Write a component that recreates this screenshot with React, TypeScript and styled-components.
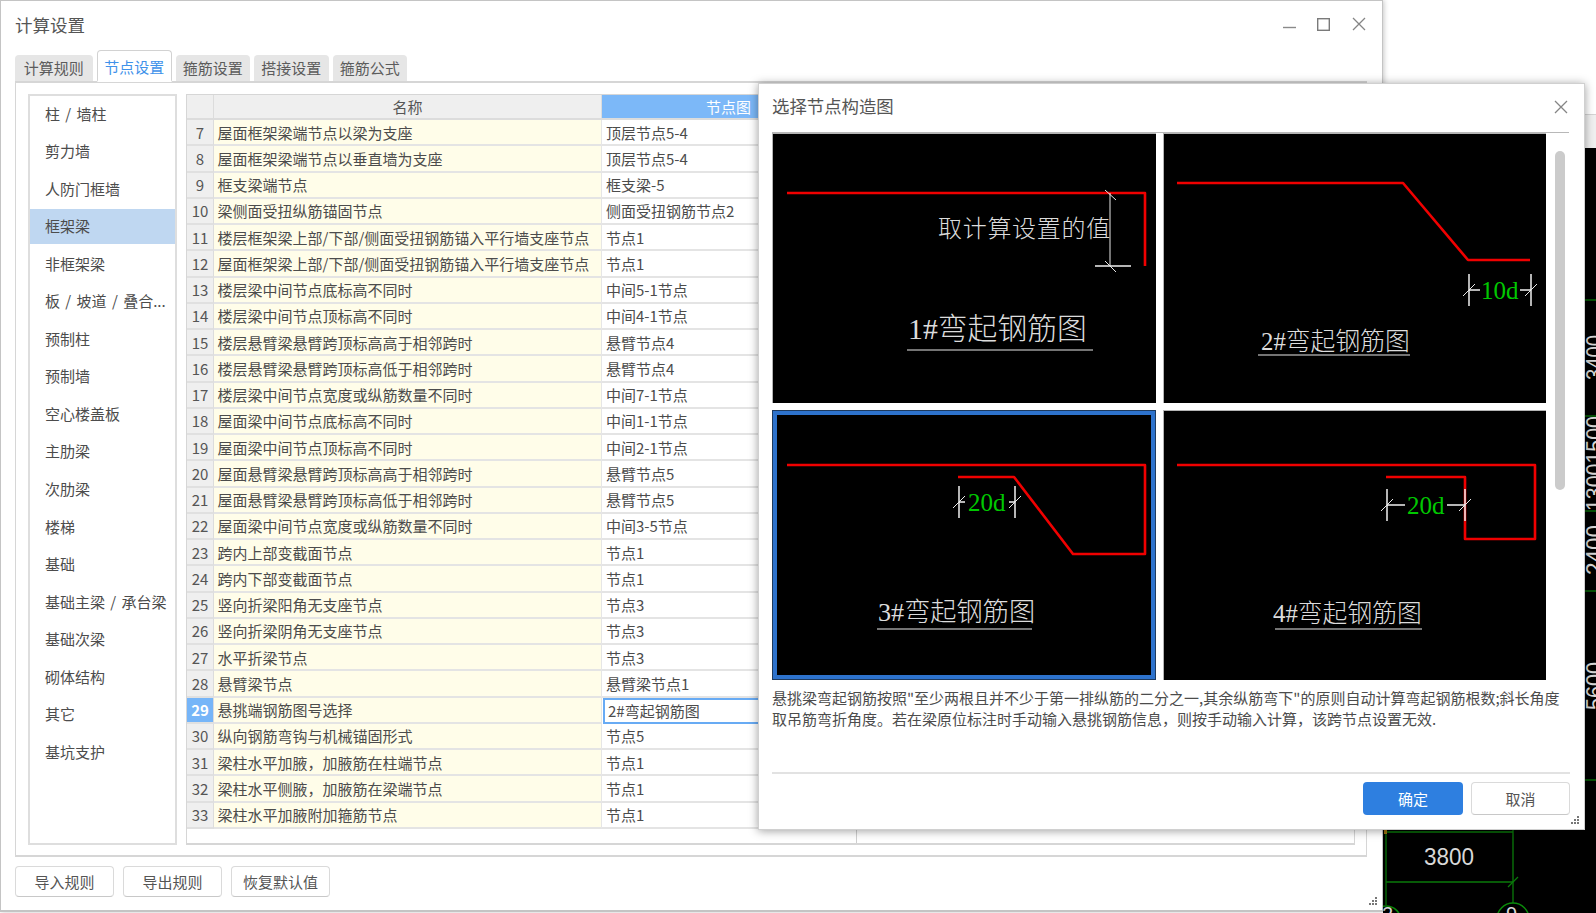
import React from "react";
import styled, { createGlobalStyle } from "styled-components";

const Global = createGlobalStyle`
  html, body { margin: 0; padding: 0; background: #fff; }
  body { font-family: "Noto Sans CJK SC", "Noto Sans", sans-serif; color: #4c4c4c; }
  * { box-sizing: border-box; }
`;

const Desktop = styled.div`
  position: relative;
  width: 1596px;
  height: 913px;
  overflow: hidden;
  background: #fff;
`;

/* window behind: the CAD view */
const CadWindow = styled.div`
  position: absolute;
  left: 1383px;
  top: 0;
  width: 213px;
  height: 913px;
  display: flex;
  flex-direction: column;
`;
const CadTop = styled.div`
  height: 115px;
  background: #fff;
  border-bottom: 1px solid #d4d4d4;
`;
const CadStrip = styled.div`
  height: 33px;
  background: #f0f0f0;
`;
const CadView = styled.div`
  flex: 1;
  background: #000;
  svg { display: block; }
`;

/* main window */
const MainWindow = styled.div`
  position: absolute;
  left: 0;
  top: 0;
  width: 1383px;
  height: 912px;
  background: #fff;
  border: 1px solid #c4c4c4;
  border-bottom-width: 2px;
  box-shadow: 1px 0 5px rgba(0, 0, 0, 0.22);
  padding: 0 15px 0 14px;
  display: flex;
  flex-direction: column;
`;
const TitleBar = styled.div`
  height: 49px;
  flex: none;
  display: flex;
  align-items: center;
  justify-content: space-between;
  padding-bottom: 1px;
`;
const WindowTitle = styled.div`
  font-size: 17.5px;
  line-height: 24px;
  color: #555;
`;
const WindowControls = styled.div`
  display: flex;
  gap: 22px;
  align-items: center;
  margin-right: 1px;
  margin-bottom: 2px;
  svg { display: block; }
`;
const MinimizeIcon = styled.svg`
  margin: 0 -1px 4px 1px;
`;
const TabBar = styled.div`
  height: 31px;
  flex: none;
  display: flex;
  align-items: flex-end;
  gap: 4px;
  position: relative;
  z-index: 1;
`;
const Tab = styled.div<{ $active?: boolean; $first?: boolean }>`
  width: ${(p) => (p.$first ? "77.5px" : "74.5px")};
  height: ${(p) => (p.$active ? "32px" : "26px")};
  margin-bottom: ${(p) => (p.$active ? "-1px" : "0")};
  margin-left: ${(p) => (p.$active ? "0.5px" : "0")};
  display: flex;
  align-items: center;
  justify-content: center;
  padding-top: ${(p) => (p.$active ? "1px" : "0")};
  padding-bottom: ${(p) => (p.$active ? "0" : "1px")};
  font-size: 15px;
  border-radius: 4px 4px 0 0;
  color: ${(p) => (p.$active ? "#3f92ea" : "#5c5c5c")};
  background: ${(p) => (p.$active ? "#fff" : "#e6e6e6")};
  border: ${(p) => (p.$active ? "1px solid #d2d2d2" : "none")};
  border-bottom: ${(p) => (p.$active ? "2px solid #fff" : "none")};
`;
const Pane = styled.div`
  height: 776px;
  flex: none;
  border: 1px solid #d6d6d6;
  border-top-width: 2px;
  border-bottom-width: 2px;
  padding: 11px 11px 10px 12px;
  display: flex;
  gap: 9px;
`;
const Sidebar = styled.div`
  width: 149px;
  flex: none;
  border: 2px solid #dedede;
  padding-top: 0.5px;
  display: flex;
  flex-direction: column;
  gap: 2.55px;
`;
const SideItem = styled.div<{ $active?: boolean }>`
  height: 35px;
  flex: none;
  padding: 0 0 2px 15px;
  display: flex;
  align-items: center;
  font-size: 15px;
  word-spacing: 2px;
  white-space: pre;
  background: ${(p) => (p.$active ? "#bfd7f1" : "transparent")};
`;
const Table = styled.div`
  flex: 1;
  border: 1px solid #d6d6d6;
  border-bottom-width: 2px;
  display: flex;
  flex-direction: column;
  min-width: 0;
`;
const Row = styled.div<{ $header?: boolean }>`
  display: grid;
  grid-template-columns: 27px 388px 254px 1fr;
  height: ${(p) => (p.$header ? "25px" : "26.25px")};
  flex: none;
`;
const IndexCell = styled.div<{ $current?: boolean }>`
  display: flex;
  align-items: center;
  justify-content: center;
  font-size: 15px;
  background: ${(p) => (p.$current ? "#76b5f8" : "#efefef")};
  color: ${(p) => (p.$current ? "#fff" : "#555")};
  font-weight: ${(p) => (p.$current ? 700 : 400)};
  border-right: 1px solid #dcdcdc;
  border-bottom: 2px solid #e0e0e0;
`;
const NameCell = styled.div`
  display: flex;
  align-items: center;
  padding-left: 3.5px;
  font-size: 15px;
  white-space: nowrap;
  background: #fffde9;
  border-right: 1px solid #e6e6e6;
  border-bottom: 2px solid #e4e4e4;
`;
const NodeCell = styled.div<{ $current?: boolean }>`
  display: flex;
  align-items: center;
  padding-left: ${(p) => (p.$current ? "3px" : "4px")};
  font-size: 15px;
  white-space: nowrap;
  background: #fff;
  border: ${(p) => (p.$current ? "2px solid #68abf4" : "none")};
  border-bottom: 2px solid ${(p) => (p.$current ? "#68abf4" : "#e4e4e4")};
  margin-left: ${(p) => (p.$current ? "1px" : "0")};
`;
const HeadCell = styled.div<{ $active?: boolean }>`
  display: flex;
  align-items: center;
  justify-content: center;
  font-size: 15px;
  padding-bottom: 1px;
  background: ${(p) => (p.$active ? "#7cb8f8" : "#efefef")};
  color: ${(p) => (p.$active ? "#fff" : "#555")};
  border-right: 1px solid #dcdcdc;
  border-bottom: 2px solid #dcdcdc;
`;
const TableFiller = styled.div`
  flex: 1;
  display: grid;
  grid-template-columns: 670px 1fr;
`;
const FillerLeft = styled.div`
  border-right: 1px solid #cfcfcf;
`;
const FillerRight = styled.div``;
const Footer = styled.div`
  display: flex;
  gap: 9px;
  padding-top: 9px;
`;
const FootButton = styled.div`
  width: 99px;
  height: 31px;
  display: flex;
  align-items: center;
  justify-content: center;
  font-size: 15px;
  border: 1px solid #dadada;
  border-bottom-color: #c8c8c8;
  border-radius: 4px;
  background: #fff;
  color: #555;
`;
const Grip = styled.svg`
  position: absolute;
  display: block;
  right: 4px;
  bottom: 4px;
`;

/* dialog */
const Dialog = styled.div`
  position: absolute;
  left: 758px;
  top: 83px;
  width: 827px;
  height: 747px;
  background: #fff;
  border: 1px solid #d0d0d0;
  box-shadow: 0 1px 9px rgba(0, 0, 0, 0.38);
  padding: 0 14px 0 13px;
  display: flex;
  flex-direction: column;
`;
const DialogHeader = styled.div`
  height: 49px;
  flex: none;
  border-bottom: 1px solid #b8b8b8;
  margin-right: 1px;
  display: flex;
  align-items: center;
  justify-content: space-between;
  padding-bottom: 5px;
`;
const DialogTitle = styled.div`
  font-size: 17.4px;
  color: #555;
`;
const CloseButton = styled.div`
  margin: 2px 1px 0 0;
  svg { display: block; }
`;
const DialogBody = styled.div`
  display: flex;
  flex: none;
`;
const Gallery = styled.div`
  width: 774px;
  flex: none;
  display: grid;
  grid-template-columns: 384px 383px;
  grid-template-rows: 270px 270px;
  gap: 7px;
`;
const Figure = styled.div<{ $selected?: boolean }>`
  background: #000;
  box-shadow: ${(p) =>
    p.$selected
      ? "inset 0 0 0 1px #1d3a5e, inset 0 0 0 5px #2d72cc"
      : "inset 1px 1px 0 #b4b4b4"};
  svg { display: block; }
`;
const ScrollTrack = styled.div`
  padding: 18px 0 0 9px;
`;
const ScrollThumb = styled.div`
  width: 10px;
  height: 339px;
  border-radius: 5px;
  background: #cbcbcb;
`;
const Description = styled.div`
  flex: 1;
  padding-top: 8px;
  font-size: 15px;
  line-height: 20.6px;
  white-space: nowrap;
  color: #4c4c4c;
`;
const DialogFooter = styled.div`
  height: 57px;
  flex: none;
  border-top: 2px solid #e2e2e2;
  padding-top: 8px;
  display: flex;
  justify-content: flex-end;
  gap: 8px;
`;
const PrimaryButton = styled.div`
  width: 100px;
  height: 33px;
  display: flex;
  align-items: center;
  justify-content: center;
  padding-bottom: 1px;
  font-size: 15px;
  color: #fff;
  background: #2e7fe0;
  border-radius: 4px;
`;
const SecondaryButton = styled.div`
  width: 99px;
  height: 33px;
  display: flex;
  align-items: center;
  justify-content: center;
  padding-bottom: 1px;
  font-size: 15px;
  color: #555;
  background: #fff;
  border: 1px solid #dadada;
  border-bottom-color: #c8c8c8;
  border-radius: 4px;
`;

/* drawing parts */
const Rebar = styled.polyline`
  fill: none;
  stroke: #f00000;
  stroke-width: 2.6;
  stroke-linejoin: round;
`;
const Dim = styled.line`
  stroke: #e8e8e8;
  stroke-width: 1;
`;
const DimStrong = styled.line`
  stroke: #f2f2f2;
  stroke-width: 1.5;
`;
const DrawText = styled.text<{ $size: number }>`
  font-family: "Liberation Serif", "Noto Sans CJK SC", serif;
  font-size: ${(p) => p.$size}px;
  font-weight: 300;
  fill: #dcdcdc;
`;
const GreenText = styled.text`
  font-family: "Liberation Serif", serif;
  font-size: 25px;
  fill: #00c800;
`;
const CadLine = styled.line`
  stroke: #0a7a0a;
  stroke-width: 1.3;
`;
const CadCircle = styled.circle`
  fill: none;
  stroke: #0a8a0a;
  stroke-width: 1.5;
`;
const CadText = styled.text`
  font-family: "Liberation Sans", sans-serif;
  font-size: 24px;
  fill: #d8d8d8;
`;

const sideItems = [
  "柱 / 墙柱", "剪力墙", "人防门框墙", "框架梁", "非框架梁", "板 / 坡道 / 叠合...",
  "预制柱", "预制墙", "空心楼盖板", "主肋梁", "次肋梁", "楼梯", "基础",
  "基础主梁 / 承台梁", "基础次梁", "砌体结构", "其它", "基坑支护",
];

const rows: [number, string, string][] = [
  [7, "屋面框架梁端节点以梁为支座", "顶层节点5-4"],
  [8, "屋面框架梁端节点以垂直墙为支座", "顶层节点5-4"],
  [9, "框支梁端节点", "框支梁-5"],
  [10, "梁侧面受扭纵筋锚固节点", "侧面受扭钢筋节点2"],
  [11, "楼层框架梁上部/下部/侧面受扭钢筋锚入平行墙支座节点", "节点1"],
  [12, "屋面框架梁上部/下部/侧面受扭钢筋锚入平行墙支座节点", "节点1"],
  [13, "楼层梁中间节点底标高不同时", "中间5-1节点"],
  [14, "楼层梁中间节点顶标高不同时", "中间4-1节点"],
  [15, "楼层悬臂梁悬臂跨顶标高高于相邻跨时", "悬臂节点4"],
  [16, "楼层悬臂梁悬臂跨顶标高低于相邻跨时", "悬臂节点4"],
  [17, "楼层梁中间节点宽度或纵筋数量不同时", "中间7-1节点"],
  [18, "屋面梁中间节点底标高不同时", "中间1-1节点"],
  [19, "屋面梁中间节点顶标高不同时", "中间2-1节点"],
  [20, "屋面悬臂梁悬臂跨顶标高高于相邻跨时", "悬臂节点5"],
  [21, "屋面悬臂梁悬臂跨顶标高低于相邻跨时", "悬臂节点5"],
  [22, "屋面梁中间节点宽度或纵筋数量不同时", "中间3-5节点"],
  [23, "跨内上部变截面节点", "节点1"],
  [24, "跨内下部变截面节点", "节点1"],
  [25, "竖向折梁阳角无支座节点", "节点3"],
  [26, "竖向折梁阴角无支座节点", "节点3"],
  [27, "水平折梁节点", "节点3"],
  [28, "悬臂梁节点", "悬臂梁节点1"],
  [29, "悬挑端钢筋图号选择", "2#弯起钢筋图"],
  [30, "纵向钢筋弯钩与机械锚固形式", "节点5"],
  [31, "梁柱水平加腋\uFF0C加腋筋在柱端节点", "节点1"],
  [32, "梁柱水平侧腋\uFF0C加腋筋在梁端节点", "节点1"],
  [33, "梁柱水平加腋附加箍筋节点", "节点1"],
];

const descLine2 = "取吊筋弯折角度。若在梁原位标注时手动输入悬挑钢筋信息\uFF0C则按手动输入计算\uFF0C该跨节点设置无效.";

const GripIcon = () => (
  <Grip width="10" height="10" viewBox="0 0 10 10" fill="#777">
    <rect x="7" y="1" width="2" height="2" />
    <rect x="4" y="4" width="2" height="2" />
    <rect x="7" y="4" width="2" height="2" />
    <rect x="1" y="7" width="2" height="2" />
    <rect x="4" y="7" width="2" height="2" />
    <rect x="7" y="7" width="2" height="2" />
  </Grip>
);

const Cross = ({ size }: { size: number }) => (
  <svg width={size} height={size} viewBox="0 0 14 14" fill="none" stroke="#858585" strokeWidth="1.3">
    <path d="M1 1 L13 13 M13 1 L1 13" />
  </svg>
);

const DimH = ({ x1, x2, y, arm }: { x1: number; x2: number; y: number; arm: number }) => (
  <>
    <DimStrong x1={x1} y1={y - 16} x2={x1} y2={y + 16} />
    <DimStrong x1={x2} y1={y - 16} x2={x2} y2={y + 16} />
    <Dim x1={x1 - 6} y1={y + 6} x2={x1 + 6} y2={y - 6} />
    <Dim x1={x2 - 6} y1={y + 6} x2={x2 + 6} y2={y - 6} />
    <DimStrong x1={x1} y1={y} x2={x1 + arm} y2={y} />
    <DimStrong x1={x2 - arm} y1={y} x2={x2} y2={y} />
  </>
);

export default function App() {
  return (
    <Desktop>
      <Global />
      <CadWindow>
        <CadTop />
        <CadStrip />
        <CadView>
          <svg width="213" height="765" viewBox="1383 148 213 765">
            <CadLine x1="1585" y1="300" x2="1596" y2="300" />
            <CadLine x1="1585" y1="416" x2="1596" y2="416" />
            <CadLine x1="1585" y1="511" x2="1596" y2="511" />
            <CadLine x1="1585" y1="591" x2="1596" y2="591" />
            <CadLine x1="1585" y1="780" x2="1596" y2="780" />
            <CadText transform="translate(1603 380) rotate(-90)" textLength="45" lengthAdjust="spacingAndGlyphs">3400</CadText>
            <CadText transform="translate(1603 511) rotate(-90)" textLength="95" lengthAdjust="spacingAndGlyphs">13001500</CadText>
            <CadText transform="translate(1603 575) rotate(-90)" textLength="50" lengthAdjust="spacingAndGlyphs">2400</CadText>
            <CadText transform="translate(1603 710) rotate(-90)" textLength="48" lengthAdjust="spacingAndGlyphs">5600</CadText>
            <CadLine x1="1386" y1="832" x2="1513" y2="832" />
            <CadLine x1="1386" y1="830" x2="1386" y2="905" />
            <CadLine x1="1513" y1="830" x2="1513" y2="903" />
            <CadLine x1="1386" y1="882" x2="1513" y2="882" />
            <CadLine x1="1508" y1="887" x2="1518" y2="877" />
            <rect x="1384" y="830" width="3" height="4" fill="#a87a10" />
            <CadText x="1424" y="865" textLength="50" lengthAdjust="spacingAndGlyphs">3800</CadText>
            <CadCircle cx="1386" cy="921" r="15" />
            <CadCircle cx="1513" cy="919" r="16" />
            <CadText x="1506" y="921" style={{ fontSize: 20 }}>9</CadText>
            <CadText x="1382" y="921" style={{ fontSize: 20 }}>2</CadText>
          </svg>
        </CadView>
      </CadWindow>

      <MainWindow>
        <TitleBar>
          <WindowTitle>计算设置</WindowTitle>
          <WindowControls>
            <MinimizeIcon width="13" height="13" viewBox="0 0 13 13" stroke="#8a8a8a" strokeWidth="1.4">
              <path d="M0 11.5 H13" />
            </MinimizeIcon>
            <svg width="13" height="13" viewBox="0 0 13 13" fill="none" stroke="#7a7a7a" strokeWidth="1.4">
              <rect x="0.7" y="0.7" width="11.6" height="11.6" />
            </svg>
            <Cross size={14} />
          </WindowControls>
        </TitleBar>
        <TabBar>
          <Tab $first>计算规则</Tab>
          <Tab $active>节点设置</Tab>
          <Tab>箍筋设置</Tab>
          <Tab>搭接设置</Tab>
          <Tab>箍筋公式</Tab>
        </TabBar>
        <Pane>
          <Sidebar>
            {sideItems.map((s) => (
              <SideItem key={s} $active={s === "框架梁"}>{s}</SideItem>
            ))}
          </Sidebar>
          <Table>
            <Row $header>
              <HeadCell />
              <HeadCell>名称</HeadCell>
              <HeadCell $active>节点图</HeadCell>
              <HeadCell />
            </Row>
            {rows.map(([n, name, node]) => (
              <Row key={n}>
                <IndexCell $current={n === 29}>{n}</IndexCell>
                <NameCell>{name}</NameCell>
                <NodeCell $current={n === 29}>{node}</NodeCell>
              </Row>
            ))}
            <TableFiller>
              <FillerLeft />
              <FillerRight />
            </TableFiller>
          </Table>
        </Pane>
        <Footer>
          <FootButton>导入规则</FootButton>
          <FootButton>导出规则</FootButton>
          <FootButton>恢复默认值</FootButton>
        </Footer>
        <GripIcon />
      </MainWindow>

      <Dialog>
        <DialogHeader>
          <DialogTitle>选择节点构造图</DialogTitle>
          <CloseButton><Cross size={14} /></CloseButton>
        </DialogHeader>
        <DialogBody>
          <Gallery>
            <Figure>
              <svg width="384" height="270" viewBox="772 133 384 270">
                <Rebar points="787,193 1145,193 1145,266" />
                <Dim x1="1110" y1="193" x2="1110" y2="266" />
                <Dim x1="1105" y1="190" x2="1116" y2="200" />
                <Dim x1="1105" y1="261" x2="1116" y2="272" />
                <DimStrong x1="1095" y1="266" x2="1131" y2="266" />
                <DrawText $size={24} x="938" y="237" letterSpacing="0.7">取计算设置的值</DrawText>
                <DrawText $size={29.8} x="908" y="339">1#弯起钢筋图</DrawText>
                <Dim x1="907" y1="350" x2="1093" y2="350" />
              </svg>
            </Figure>
            <Figure>
              <svg width="383" height="270" viewBox="1163 133 383 270">
                <Rebar points="1177,183 1403,183 1468,260 1530,260" />
                <DimH x1={1469} x2={1531} y={290} arm={11} />
                <GreenText x="1481" y="299">10d</GreenText>
                <DrawText $size={24.8} x="1261" y="350">2#弯起钢筋图</DrawText>
                <Dim x1="1258" y1="355" x2="1410" y2="355" />
              </svg>
            </Figure>
            <Figure $selected>
              <svg width="384" height="270" viewBox="772 410 384 270">
                <Rebar points="787,465 1145,465 1145,554 1073,554 1014,477 958,477" />
                <DimH x1={959} x2={1015} y={502} arm={6} />
                <GreenText x="968" y="511">20d</GreenText>
                <DrawText $size={26.2} x="878" y="621">3#弯起钢筋图</DrawText>
                <Dim x1="877" y1="629" x2="1032" y2="629" />
              </svg>
            </Figure>
            <Figure>
              <svg width="383" height="270" viewBox="1163 410 383 270">
                <Rebar points="1177,465 1535,465 1535,539 1465,539 1465,477 1386,477" />
                <DimH x1={1387} x2={1465} y={505} arm={18} />
                <GreenText x="1407" y="514">20d</GreenText>
                <DrawText $size={24.8} x="1273" y="622">4#弯起钢筋图</DrawText>
                <Dim x1="1275" y1="629" x2="1422" y2="629" />
              </svg>
            </Figure>
          </Gallery>
          <ScrollTrack><ScrollThumb /></ScrollTrack>
        </DialogBody>
        <Description>
          悬挑梁弯起钢筋按照"至少两根且并不少于第一排纵筋的二分之一,其余纵筋弯下"的原则自动计算弯起钢筋根数;斜长角度
          <br />
          {descLine2}
        </Description>
        <DialogFooter>
          <PrimaryButton>确定</PrimaryButton>
          <SecondaryButton>取消</SecondaryButton>
        </DialogFooter>
        <GripIcon />
      </Dialog>
    </Desktop>
  );
}
